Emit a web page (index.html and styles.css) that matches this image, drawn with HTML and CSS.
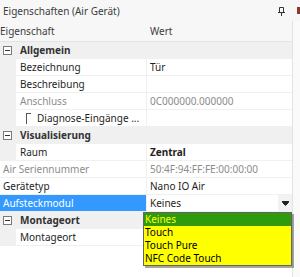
FILE: index.html
```html
<!DOCTYPE html>
<html>
<head>
  <title>Eigenschaften</title>
  <link rel="stylesheet" href="styles.css">
</head>
<body>
  <div id="window">
    <div id="panel">
      <div class="titlebar">
        <span>Eigenschaften (Air Gerät)</span>
        <svg class="pin" width="7" height="9" viewBox="0 0 7 9">
          <path d="M1.5 0.5h4v5h-4z M0 5.5h7 M3.5 6v3" fill="none" stroke="#333" stroke-width="1"/>
        </svg>
      </div>

      <div class="grid">
        <div class="row head">
          <div class="name">Eigenschaft</div>
          <div class="value">Wert</div>
        </div>

        <div class="row category">
          <div class="name"><span class="toggle"></span>Allgemein</div>
        </div>
        <div class="row">
          <div class="name"><span class="indent"></span><span class="label">Bezeichnung</span></div>
          <div class="value">Tür</div>
        </div>
        <div class="row">
          <div class="name"><span class="indent"></span><span class="label">Beschreibung</span></div>
          <div class="value"></div>
        </div>
        <div class="row disabled">
          <div class="name"><span class="indent"></span><span class="label">Anschluss</span></div>
          <div class="value">0C000000.000000</div>
        </div>
        <div class="row">
          <div class="name"><span class="indent"></span><span class="label"><span class="check"></span>Diagnose-Eingänge ...</span></div>
          <div class="value"></div>
        </div>

        <div class="row category">
          <div class="name"><span class="toggle"></span>Visualisierung</div>
        </div>
        <div class="row">
          <div class="name"><span class="indent"></span><span class="label">Raum</span></div>
          <div class="value bold">Zentral</div>
        </div>
        <div class="row disabled">
          <div class="name flat">Air Seriennummer</div>
          <div class="value">50:4F:94:FF:FE:00:00:00</div>
        </div>
        <div class="row">
          <div class="name flat">Gerätetyp</div>
          <div class="value">Nano IO Air</div>
        </div>
        <div class="row selected">
          <div class="name flat">Aufsteckmodul</div>
          <div class="value combo">
            <span>Keines</span>
            <span class="drop"><svg width="7" height="5" viewBox="0 0 7 5"><path d="M0 0.5h7M0.5 1.5h6l-3 3z" stroke="#222" fill="#222" stroke-width="1"/></svg></span>
          </div>
        </div>

        <div class="row category">
          <div class="name"><span class="toggle"></span>Montageort</div>
        </div>
        <div class="row">
          <div class="name"><span class="indent"></span><span class="label">Montageort</span></div>
          <div class="value"></div>
        </div>
      </div>

      <ul class="droplist">
        <li class="active">Keines</li>
        <li>Touch</li>
        <li>Touch Pure</li>
        <li>NFC Code Touch</li>
      </ul>
    </div>
    <div id="side">
      <div class="side-top"><span class="mark"></span></div>
      <div class="side-body"></div>
    </div>
  </div>
</body>
</html>
```

FILE: styles.css
```css
body {
  margin: 0;
  font-family: "Noto Sans", "Open Sans", sans-serif;
  font-size: 10px;
  color: #1e1e1e;
  background-color: #fff;
}

#window {
  display: flex;
  width: 300px;
  height: 277px;
}

#panel {
  position: relative;
  width: 292px;
  background-color: #fff;
}

#side {
  flex: 1;
  display: flex;
  flex-direction: column;
}

.side-top {
  display: flex;
  justify-content: flex-end;
  align-items: center;
  height: 21px;
  background-color: #f7f7f7;
}

.mark {
  width: 3px;
  height: 7px;
  background-color: #8a3a2a;
}

.side-body {
  flex: 1;
  border-left: 1px solid #e3e3e3;
  background-color: #fafafa;
}

.titlebar {
  display: flex;
  align-items: center;
  justify-content: space-between;
  height: 21px;
  padding: 0 7px 0 3px;
  color: #3c3c3c;
  background-color: #f7f7f7;
}

.pin {
  margin-top: 1px;
}

.grid {
  background-color: #fff;
}

.row {
  display: grid;
  grid-template-columns: 146px 1fr;
  column-gap: 1px;
  height: 16px;
  line-height: 16px;
  border-bottom: 1px solid #f0f0f0;
  background-color: #f0f0f0;
  white-space: nowrap;
}

.row.head {
  height: 20px;
  line-height: 20px;
  border-bottom: 1px solid #e4e4e4;
  background-color: #f7f7f7;
  color: #3c3c3c;
}

.row.head .name,
.row.head .value {
  background-color: #f7f7f7;
}

.name {
  display: flex;
  overflow: hidden;
  background-color: #fff;
}

.indent {
  width: 16px;
  flex: none;
  background-color: #f0f0f0;
}

.label {
  display: flex;
  align-items: center;
  padding-left: 4px;
}

.name.flat {
  padding-left: 3px;
}

.value {
  padding-left: 3px;
  background-color: #fff;
  overflow: hidden;
}

.bold {
  font-weight: bold;
}

.row.category {
  grid-template-columns: 1fr;
}

.row.category .name {
  align-items: center;
  font-weight: bold;
  color: #333;
  background-color: #f0f0f0;
}

.toggle {
  position: relative;
  width: 7px;
  height: 7px;
  margin: 0 8px 0 3px;
  border: 1px solid #7a7a7a;
  background-color: #fff;
}

.toggle::after {
  content: "";
  position: absolute;
  left: 1px;
  top: 3px;
  width: 5px;
  height: 1px;
  background-color: #333;
}

.check {
  width: 4px;
  height: 10px;
  margin: 0 6px 0 6px;
  border-top: 1px solid #555;
  border-left: 1px solid #555;
}

.row.disabled {
  color: #8c8c8c;
}

.row.selected .name {
  color: #fff;
  background-color: #3399ff;
}

.combo {
  display: flex;
  justify-content: space-between;
}

.drop {
  display: flex;
  align-items: center;
  justify-content: center;
  width: 14px;
  background-color: #f2f2f2;
}

.droplist {
  position: absolute;
  left: 143px;
  top: 212px;
  width: 147px;
  margin: 0;
  padding: 0;
  list-style: none;
  border: 1px solid #646464;
  background-color: #ffff00;
  box-shadow: 2px 2px 0 rgba(0, 0, 0, 0.35);
}

.droplist li {
  height: 13px;
  line-height: 13px;
  padding-left: 1px;
  color: #000;
}

.droplist li.active {
  color: #ffff00;
  background-color: #2f9a0c;
}
```
